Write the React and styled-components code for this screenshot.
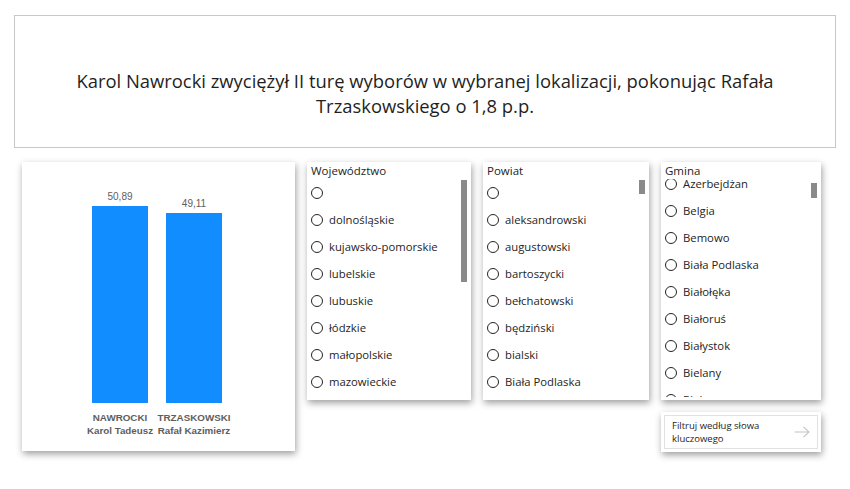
import React from "react";
import styled, { createGlobalStyle } from "styled-components";

const GlobalStyle = createGlobalStyle`
  html, body {
    margin: 0;
    padding: 0;
    background: #ffffff;
  }
  body {
    font-family: "Open Sans", "Liberation Sans", sans-serif;
    color: #252423;
  }
`;

const candidates = [
  { value: 50.89, last: "NAWROCKI", first: "Karol Tadeusz" },
  { value: 49.11, last: "TRZASKOWSKI", first: "Rafał Kazimierz" },
];

const wojewodztwa = [
  "",
  "dolnośląskie",
  "kujawsko-pomorskie",
  "lubelskie",
  "lubuskie",
  "łódzkie",
  "małopolskie",
  "mazowieckie",
];

const powiaty = [
  "",
  "aleksandrowski",
  "augustowski",
  "bartoszycki",
  "bełchatowski",
  "będziński",
  "bialski",
  "Biała Podlaska",
];

const gminy = [
  "Azerbejdżan",
  "Belgia",
  "Bemowo",
  "Biała Podlaska",
  "Białołęka",
  "Białoruś",
  "Białystok",
  "Bielany",
  "Bielawa",
];

function Slicer({ title, items, width, offset, thumbTop, thumbHeight }) {
  return (
    <SlicerCard $width={width}>
      <SlicerTitle>{title}</SlicerTitle>
      <Viewport>
        <ItemList $offset={offset}>
          {items.map((item, i) => (
            <Item key={i}>
              <Radio />
              <span>{item}</span>
            </Item>
          ))}
        </ItemList>
      </Viewport>
      <Thumb $top={thumbTop} $height={thumbHeight} />
    </SlicerCard>
  );
}

function App() {
  const scale = 3.87;
  return (
    <>
      <GlobalStyle />
      <Page>
        <Headline>
          <p>
            Karol Nawrocki zwyciężył II turę wyborów w wybranej lokalizacji, pokonując Rafała
            Trzaskowskiego o 1,8 p.p.
          </p>
        </Headline>

        <Row>
          <ChartCard>
            <Plot>
              {candidates.map((c) => (
                <BarColumn key={c.last}>
                  <ValueLabel>{c.value.toFixed(2).replace(".", ",")}</ValueLabel>
                  <Bar style={{ height: Math.round(c.value * scale) }} />
                </BarColumn>
              ))}
            </Plot>
            <Axis>
              {candidates.map((c) => (
                <Category key={c.last}>
                  {c.last}
                  <br />
                  {c.first}
                </Category>
              ))}
            </Axis>
          </ChartCard>

          <Slicer title="Województwo" items={wojewodztwa} width={164} offset={0} thumbTop={18} thumbHeight={102} />
          <Slicer title="Powiat" items={powiaty} width={166} offset={0} thumbTop={18} thumbHeight={14} />

          <Column>
            <Slicer title="Gmina" items={gminy} width={160} offset={-9} thumbTop={21} thumbHeight={15} />
            <SearchCard>
              <SearchField>
                <span>Filtruj według słowa kluczowego</span>
                <svg width="16" height="12" viewBox="0 0 16 12">
                  <path d="M0.5 6 H15 M9.5 0.8 L15 6 L9.5 11.2" fill="none" stroke="#c4c4c4" strokeWidth="1.1" />
                </svg>
              </SearchField>
            </SearchCard>
          </Column>
        </Row>
      </Page>
    </>
  );
}

const Page = styled.div`
  width: 850px;
  height: 489px;
  padding: 15px 14px 0 14px;
  box-sizing: border-box;
`;

const Headline = styled.div`
  height: 133px;
  border: 1px solid #c8c8c8;
  box-sizing: border-box;
  display: flex;
  align-items: center;
  justify-content: center;
  padding: 22px 50px 0;
  p {
    margin: 0;
    text-align: center;
    font-family: "Open Sans", sans-serif;
    font-size: 18.4px;
    line-height: 25px;
    color: #1f1f1f;
  }
`;

const Row = styled.div`
  display: flex;
  align-items: flex-start;
  gap: 12px;
  margin-top: 14px;
  padding-left: 8px;
`;

const shadow = "1px 3px 7px rgba(0, 0, 0, 0.38)";

const ChartCard = styled.div`
  width: 273px;
  height: 289px;
  background: #fff;
  box-shadow: ${shadow};
  padding-left: 61px;
  box-sizing: border-box;
  flex: 0 0 auto;
`;

const Plot = styled.div`
  height: 241px;
  display: flex;
  align-items: flex-end;
`;

const BarColumn = styled.div`
  width: 74px;
  display: flex;
  flex-direction: column;
  align-items: center;
`;

const ValueLabel = styled.div`
  font-family: "Liberation Sans", sans-serif;
  font-size: 10px;
  line-height: 12px;
  color: #605e5c;
  margin-bottom: 3px;
`;

const Bar = styled.div`
  width: 56px;
  background: #118dff;
`;

const Axis = styled.div`
  display: flex;
  margin-top: 8px;
`;

const Category = styled.div`
  width: 74px;
  text-align: center;
  font-family: "Liberation Sans", sans-serif;
  font-weight: 700;
  font-size: 9.8px;
  line-height: 13px;
  color: #605e5c;
  white-space: nowrap;
`;

const SlicerCard = styled.div`
  position: relative;
  width: ${(p) => p.$width}px;
  height: 238px;
  background: #fff;
  box-shadow: ${shadow};
  box-sizing: border-box;
  padding: 0 4px;
  flex: 0 0 auto;
`;

const SlicerTitle = styled.div`
  height: 17px;
  font-size: 11.5px;
  line-height: 17px;
  color: #252423;
`;

const Viewport = styled.div`
  height: 218px;
  overflow: hidden;
`;

const ItemList = styled.div`
  margin-top: ${(p) => p.$offset}px;
`;

const Item = styled.div`
  height: 27px;
  display: flex;
  align-items: center;
  gap: 6px;
  font-size: 11.3px;
  color: #252423;
  white-space: nowrap;
`;

const Radio = styled.span`
  width: 10px;
  height: 10px;
  border: 1px solid #252423;
  border-radius: 50%;
  flex: 0 0 auto;
`;

const Thumb = styled.div`
  position: absolute;
  right: 4px;
  top: ${(p) => p.$top}px;
  width: 6px;
  height: ${(p) => p.$height}px;
  background: #8a8a8a;
`;

const Column = styled.div`
  display: flex;
  flex-direction: column;
  gap: 12px;
  width: 160px;
  flex: 0 0 auto;
`;

const SearchCard = styled.div`
  height: 40px;
  background: #fff;
  box-shadow: ${shadow};
  padding: 3px;
  box-sizing: border-box;
`;

const SearchField = styled.div`
  height: 100%;
  border: 1px solid #e1e1e1;
  box-sizing: border-box;
  display: flex;
  align-items: center;
  justify-content: space-between;
  padding: 0 7px 0 7px;
  span {
    width: 110px;
    font-size: 9.5px;
    line-height: 13px;
    color: #252423;
  }
`;

export default App;
